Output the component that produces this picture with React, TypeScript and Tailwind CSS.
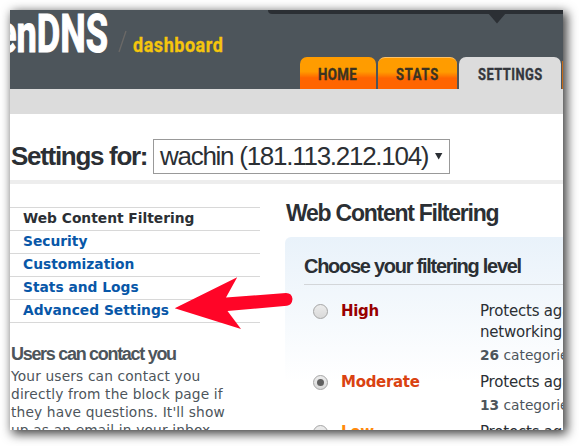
import React from "react";

const verdana = "font-['DejaVu_Sans',sans-serif]";
const arial = "font-['Liberation_Sans',sans-serif]";
const gothic = "font-['Roboto',sans-serif]";

function Tab({ label, className, text }: { label: string; className: string; text: string }) {
  return (
    <div className={`flex h-8 shrink-0 items-start overflow-hidden rounded-t-[7px] ${className}`}>
      <span className={`block origin-left whitespace-nowrap font-bold leading-[20px] text-[17px] ${gothic} ${text}`}>
        {label}
      </span>
    </div>
  );
}

function Header() {
  return (
    <header className="h-[79px] bg-[#4d555b]">
      <div className="flex h-[14px] justify-end">
        <div className="flex h-[4px] w-[295px] justify-end rounded-bl-[8px] bg-[#2b2f34]">
          <svg className="mr-[57px] mt-[3px] h-[11px] w-[18px] shrink-0" viewBox="0 0 18 11">
            <path d="M0 0H18L9 10.5Z" fill="#2b2f34" />
          </svg>
        </div>
      </div>
      <div className="-mt-[14px] flex h-[47px]">
        <div className="w-[98px] shrink-0">
          <span className={`-ml-[13px] block origin-left scale-x-[.67] whitespace-nowrap text-[54px] font-bold leading-[47px] text-white [-webkit-text-stroke:1.2px_white] ${gothic}`}>
            enDNS
          </span>
        </div>
        <svg className="ml-[10px] mt-[20px] h-[24px] w-[10px] shrink-0" viewBox="0 0 10 24">
          <path d="M1 22L8 1" stroke="#6b6967" strokeWidth="1.3" />
        </svg>
        <span className={`ml-[5px] mt-[23px] block origin-left scale-x-[.9] whitespace-nowrap text-[20px] font-bold leading-[24px] tracking-[.6px] text-[#f5c60c] [-webkit-text-stroke:.3px_#f5c60c] ${gothic}`}>
          dashboard
        </span>
      </div>
      <nav className="ml-[290px] flex h-8 gap-[2px]">
        <Tab label="HOME" className="w-[76px] bg-linear-to-b from-[#ff9c00] from-45% to-[#ff6500] to-65% pl-[18px] pt-[7px] text-[#3b3321]" text="scale-x-[.78] tracking-[.5px] [-webkit-text-stroke:.4px_#3b3321]" />
        <Tab label="STATS" className="w-[79px] border-t border-[#ffc266] bg-linear-to-b from-[#ff9c00] from-45% to-[#ff6500] to-65% pl-[18px] pt-[6px] text-[#3b3321]" text="scale-x-[.76] tracking-[1px] [-webkit-text-stroke:.4px_#3b3321]" />
        <Tab label="SETTINGS" className="w-[102px] bg-[#dcdcdc] pl-[19px] pt-[7px] text-[#34373c]" text="scale-x-[.76] tracking-[.6px] [-webkit-text-stroke:.4px_#34373c]" />
        <div className="-ml-px h-[28px] w-1 self-end bg-[#c56a18]" />
      </nav>
    </header>
  );
}

const links = ["Web Content Filtering", "Security", "Customization", "Stats and Logs", "Advanced Settings"];

function Sidebar() {
  return (
    <aside className="w-[250px] shrink-0 pt-[23px]">
      <ul className="border-t border-[#d8d8d8]">
        {links.map((l, i) => (
          <li
            key={l}
            className={`h-[23px] whitespace-nowrap border-b border-[#d8d8d8] pl-[13px] text-[13.8px] font-bold leading-[20px] ${verdana} ${i === 0 ? "text-[#2b2f34]" : "text-[#0857a8]"}`}
          >
            {l}
          </li>
        ))}
      </ul>
      <h3 className={`mt-[21px] whitespace-nowrap pl-px text-[18px] font-bold leading-[20px] tracking-[-1.3px] text-[#4d555b] ${arial}`}>
        Users can contact you
      </h3>
      <p className={`mt-[3px] whitespace-nowrap pl-px text-[13.75px] leading-[18px] tracking-[.15px] text-[#4d555b] ${verdana}`}>
        Your users can contact you
        <br />
        directly from the block page if
        <br />
        they have questions. It'll show
        <br />
        up as an email in your inbox.
      </p>
    </aside>
  );
}

function Radio({ checked }: { checked?: boolean }) {
  return (
    <span className="ml-[9px] mt-[4px] flex size-[15px] shrink-0 items-center justify-center rounded-full border border-[#a5a5a5] bg-linear-to-b from-[#ececec] to-[#d9d9d9]">
      {checked && <span className="size-[7px] rounded-full bg-[#606060]" />}
    </span>
  );
}

function Level({ name, color, lines, count, checked, height }: { name: string; color: string; lines: string[]; count: string; checked?: boolean; height: string }) {
  return (
    <div className={`flex ${height} ${verdana}`}>
      <Radio checked={checked} />
      <span className={`ml-[13px] mt-px w-[139px] shrink-0 text-[15px] font-bold leading-[21px] tracking-[-.3px] ${color}`}>{name}</span>
      <div className="mt-px whitespace-nowrap text-[15px] leading-[21px] tracking-[-.2px] text-[#2b2f34]">
        {lines.map((l) => (
          <div key={l}>{l}</div>
        ))}
        <div className="text-[13.75px] leading-[24px] tracking-normal text-[#4d555b]">
          <b>{count}</b> categories
        </div>
      </div>
    </div>
  );
}

export default function App() {
  return (
    <div className="relative h-[446px] w-[579px] overflow-hidden bg-white p-[10px]">
      <div className="h-[420px] w-[553px] overflow-hidden bg-white shadow-[3px_3px_10px_1px_rgba(0,0,0,.75)]">
        <Header />
        <div className="h-[25px] bg-[#dcdcdc]" />
        <div className={`flex h-[70px] items-start border-b-[4px] border-[#ededed] pt-[25px] text-[#2b2f34] ${arial}`}>
          <h1 className="w-[143px] shrink-0 whitespace-nowrap pl-px text-[26px] font-bold leading-[34px] tracking-[-1.3px]">Settings for:</h1>
          <div className="flex h-[35px] w-[297px] items-center whitespace-nowrap border border-[#999] pl-[6px] text-[26px] tracking-[-1.27px]">
            <span className="w-[275px]">wachin (181.113.212.104)</span>
            <svg className="h-[7px] w-[8px]" viewBox="0 0 8 7">
              <path d="M0 0H7.4L3.7 6.5Z" fill="#2b2f34" />
            </svg>
          </div>
        </div>
        <div className="flex">
          <Sidebar />
          <main className="ml-[25px] w-[278px] shrink-0 pt-[16px]">
            <h2 className={`h-[37px] whitespace-nowrap pl-px text-[23px] font-bold leading-[26px] tracking-[-1.25px] text-[#2b2f34] ${arial}`}>
              Web Content Filtering
            </h2>
            <section className="h-[220px] rounded-tl-[6px] bg-linear-to-b from-[#e9f2fa] to-white to-[145px] pl-[19px] pt-[17px]">
              <h3 className={`h-[31px] whitespace-nowrap border-b border-[#d3d6d9] text-[20px] font-bold leading-[24px] tracking-[-1.27px] text-[#2b2f34] ${arial}`}>
                Choose your filtering level
              </h3>
              <div className="pt-[15px]">
                <Level name="High" color="text-[#980000]" lines={["Protects against", "networking sites"]} count="26" height="h-[71px]" />
                <Level name="Moderate" color="text-[#da4211]" lines={["Protects against"]} count="13" height="h-[50px]" checked />
                <Level name="Low" color="text-[#ff8a0c]" lines={["Protects against"]} count="5" height="h-[50px]" />
              </div>
            </section>
          </main>
        </div>
      </div>
      <svg className="absolute left-[174px] top-[276px] h-[54px] w-[120px]" viewBox="174 276 120 54">
        <path d="M174.7 308.3L237.2 277.3L226 297.5L286 293Q292 293 292.5 299Q292 305 287 305.7L227.5 311L241 329Z" fill="#ff0527" />
      </svg>
    </div>
  );
}
